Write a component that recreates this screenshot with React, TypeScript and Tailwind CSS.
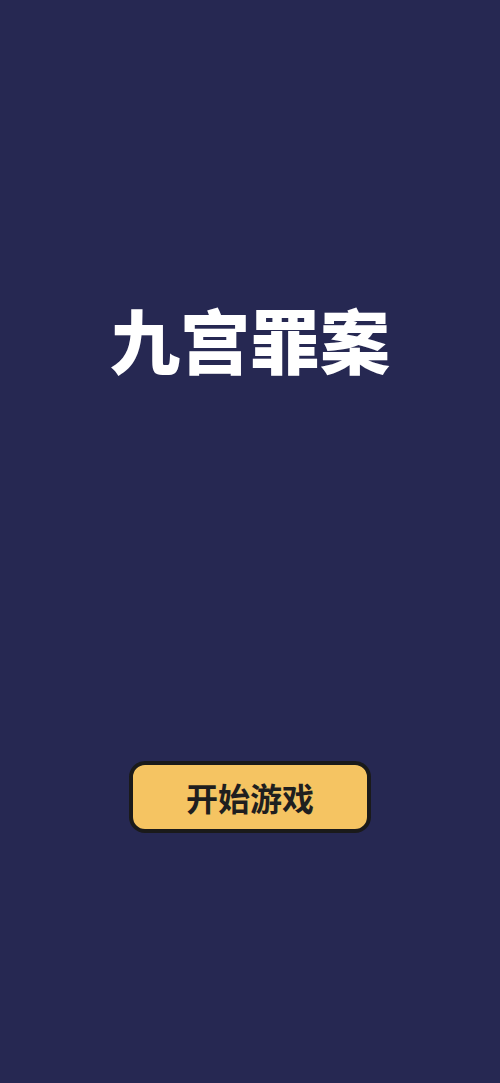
export default function App() {
  return (
    <div
      className="flex h-[1083px] w-full flex-col items-center bg-[#262852]"
      style={{ fontFamily: '"Noto Sans CJK SC", "Noto Sans", sans-serif' }}
    >
      <h1 className="mt-[304px] text-[70px] font-black leading-[70px] text-white">
        九宫罪案
      </h1>
      <button className="mt-[387px] flex h-[72px] w-[242px] items-center justify-center rounded-[16px] border-4 border-[#1a1a1a] bg-[#f5c462] text-[32px] font-bold text-[#1f1f1f]">
        开始游戏
      </button>
    </div>
  );
}
